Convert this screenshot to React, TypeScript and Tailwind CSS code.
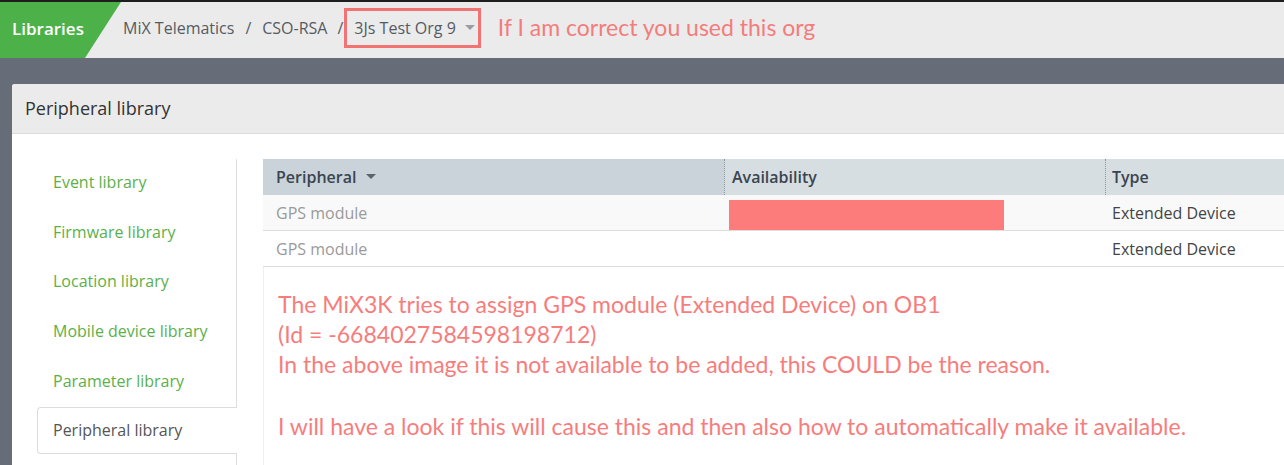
import React from "react";

const navItems = [
  "Event library",
  "Firmware library",
  "Location library",
  "Mobile device library",
  "Parameter library",
];

const rows = [
  { name: "GPS module", type: "Extended Device", flagged: true },
  { name: "GPS module", type: "Extended Device", flagged: false },
];

function Caret({ className }: { className?: string }) {
  return (
    <svg width="10" height="6" viewBox="0 0 10 6" className={className} aria-hidden="true">
      <path d="M0 0h10L5 5z" fill="currentColor" />
    </svg>
  );
}

export default function App() {
  return (
    <div className="w-[1284px] h-[465px] overflow-hidden bg-[#666d78] flex flex-col font-['Open_Sans',sans-serif]">
      <div className="h-[2px] shrink-0 bg-[#1e1e1e]" />

      {/* Top bar with breadcrumbs */}
      <div className="h-[56px] shrink-0 bg-[#ebebeb] flex items-center">
        <div className="h-full w-[121px] bg-[#4db14a] flex items-center pl-[12px] pb-[3px] [clip-path:polygon(0_0,100%_0,calc(100%-36px)_100%,0_100%)]">
          <span className="text-white text-[17px] font-semibold leading-none">Libraries</span>
        </div>
        <div className="flex items-center ml-[2px] mb-[4px] text-[16px] text-[#555b63]">
          <span>MiX Telematics</span>
          <span className="mx-[11px]">/</span>
          <span>CSO-RSA</span>
          <span className="ml-[10px] mr-[1px]">/</span>
          <div className="flex items-center h-[40px] border-[3px] border-[#f07474] pl-[7px] pr-[3px]">
            <span>3Js Test Org 9</span>
            <Caret className="ml-[9px] text-[#9a9ea3]" />
          </div>
        </div>
        <span className="ml-[17px] mb-[6px] text-[23px] text-[#f47c7c] font-['Lato',sans-serif]">
          If I am correct you used this org
        </span>
      </div>

      {/* Panel */}
      <div className="flex-1 mt-[26px] ml-[12px] bg-white rounded-tl-[3px] flex flex-col">
        <div className="h-[50px] shrink-0 bg-[#ebebeb] border-b border-[#dcdcdc] flex items-center px-[13px] rounded-tl-[3px]">
          <span className="text-[18px] text-[#333]">Peripheral library</span>
        </div>

        <div className="flex flex-1 pt-[25px]">
          {/* Side nav */}
          <nav className="w-[225px] shrink-0 pl-[25px] flex flex-col">
            {navItems.map((item) => (
              <div
                key={item}
                className="h-[49.6px] flex items-center pl-[16px] pb-[3px] border-r border-[#dedede] text-[16px] text-[#5cb04a]"
              >
                {item}
              </div>
            ))}
            <div className="h-[47px] flex items-center pl-[15px] border border-r-0 border-[#dcdcdc] rounded-l-[4px] text-[16px] text-[#555]">
              Peripheral library
            </div>
            <div className="flex-1 border-r border-[#dedede]" />
          </nav>

          {/* Table and notes */}
          <div className="flex-1 ml-[26px] flex flex-col min-w-0">
            <div className="grid grid-cols-[461px_381px_1fr] text-[16px]">
              <div className="h-[36px] bg-[#c9d3d9] flex items-center pl-[13px] font-semibold text-[#3b4550]">
                Peripheral
                <Caret className="ml-[10px] text-[#5a646e]" />
              </div>
              <div className="h-[36px] bg-[#d6dee2] border-l border-dotted border-[#8c96a0] flex items-center pl-[7px] font-semibold text-[#3b4550]">
                Availability
              </div>
              <div className="h-[36px] bg-[#d6dee2] border-l border-dotted border-[#8c96a0] flex items-center pl-[6px] font-semibold text-[#3b4550]">
                Type
              </div>
              {rows.map((r, i) => (
                <React.Fragment key={i}>
                  <div
                    className={`h-[36px] border-b border-[#dddddd] flex items-center pl-[13px] text-[#9a9a9a] ${
                      r.flagged ? "bg-[#f9f9f9]" : "bg-white"
                    }`}
                  >
                    {r.name}
                  </div>
                  <div
                    className={`h-[36px] border-b border-[#dddddd] flex items-end pl-[5px] ${
                      r.flagged ? "bg-[#f9f9f9]" : "bg-white"
                    }`}
                  >
                    {r.flagged && <div className="w-[275px] h-[30px] bg-[#fc7b7b]" />}
                  </div>
                  <div
                    className={`h-[36px] border-b border-[#dddddd] flex items-center pl-[7px] text-[#444] ${
                      r.flagged ? "bg-[#f9f9f9]" : "bg-white"
                    }`}
                  >
                    {r.type}
                  </div>
                </React.Fragment>
              ))}
            </div>
            <div className="flex-1 border-l border-[#f0f0f0] pl-[14px] pt-[22px] text-[23px] leading-[30px] text-[#f77d7d] font-['Lato',sans-serif]">
              <p>The MiX3K tries to assign GPS module (Extended Device) on OB1</p>
              <p>(Id = -6684027584598198712)</p>
              <p>In the above image it is not available to be added, this COULD be the reason.</p>
              <p className="mt-[32px]">
                I will have a look if this will cause this and then also how to automatically make it available.
              </p>
            </div>
          </div>
        </div>
      </div>
    </div>
  );
}
